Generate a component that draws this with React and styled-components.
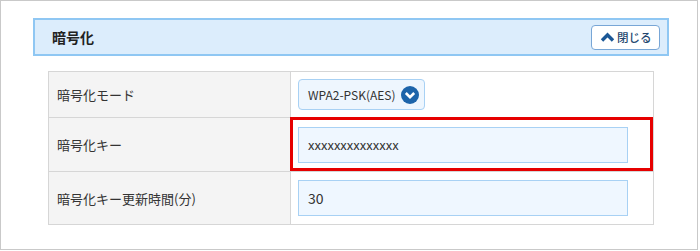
import React from "react";
import styled, { createGlobalStyle } from "styled-components";

const GlobalStyle = createGlobalStyle`
body {
  margin: 0;
  background: #ffffff;
  font-family: "Noto Sans CJK JP", "Noto Sans", sans-serif;
  color: #333333;
}
`;

const Frame = styled.div`
  width: 698px;
  height: 250px;
  box-sizing: border-box;
  border: 1px solid #c9c9c9;
  padding: 17px 28px 0 32px;
`;

const Header = styled.div`
  height: 38px;
  box-sizing: border-box;
  border: 2px solid #8fc7f3;
  background: #dcedfc;
  display: flex;
  align-items: center;
  justify-content: space-between;
  padding: 0 7px 0 17px;
`;

const Title = styled.div`
  font-size: 14px;
  font-weight: bold;
  color: #222222;
`;

const CloseButton = styled.button`
  width: 69px;
  height: 25px;
  box-sizing: border-box;
  border: 1px solid #78a6d6;
  border-radius: 4px;
  background: #ffffff;
  display: flex;
  align-items: center;
  gap: 2px;
  padding: 0 0 0 8px;
  font-family: inherit;
  font-size: 11.5px;
  font-weight: 500;
  color: #24476f;
  cursor: pointer;
`;

const Table = styled.div`
  margin: 15px 15px 0;
  border: 1px solid #d6d6d6;
  display: grid;
  grid-template-columns: 242px 1fr;
  grid-template-rows: 45px 54px 53px;
`;

const Label = styled.div`
  background: #f4f4f4;
  border-right: 1px solid #d6d6d6;
  border-top: ${(p) => (p.$first ? "none" : "1px solid #d6d6d6")};
  display: flex;
  align-items: center;
  padding-left: 8px;
  font-size: 13px;
  color: #333333;
`;

const Value = styled.div`
  position: relative;
  border-top: ${(p) => (p.$first ? "none" : "1px solid #d6d6d6")};
  display: flex;
  align-items: center;
  padding-left: 7px;

  ${(p) =>
    p.$highlight &&
    `
    &::after {
      content: "";
      position: absolute;
      left: -1px;
      top: -1px;
      right: 0;
      bottom: 0;
      border: 3px solid #e60000;
      pointer-events: none;
    }
  `}
`;

const Select = styled.div`
  height: 31px;
  box-sizing: border-box;
  border: 1px solid #a8d1f4;
  border-radius: 4px;
  background: #eef6fe;
  display: flex;
  align-items: center;
  gap: 5px;
  padding: 0 5px 0 9px;
  font-size: 12px;
  color: #333333;
`;

const Input = styled.div`
  width: 330px;
  height: 36px;
  box-sizing: border-box;
  border: 1px solid #a8d1f4;
  background: #eff7ff;
  display: flex;
  align-items: center;
  padding-left: 9px;
  font-size: ${(p) => p.$size || "13px"};
  color: #333333;
`;

const ChevronUp = () => (
  <svg width="15" height="10" viewBox="0 0 15 10">
    <path d="M2 8.5 L7.5 3 L13 8.5" fill="none" stroke="#1b5796" strokeWidth="3.4" />
  </svg>
);

const DropIcon = () => (
  <svg width="18" height="18" viewBox="0 0 18 18">
    <circle cx="9" cy="9" r="9" fill="#1d64aa" />
    <path d="M4.8 7 L9 11.2 L13.2 7" fill="none" stroke="#ffffff" strokeWidth="2.6" />
  </svg>
);

export default function App() {
  return (
    <>
      <GlobalStyle />
      <Frame>
        <Header>
          <Title>暗号化</Title>
          <CloseButton>
            <ChevronUp />
            閉じる
          </CloseButton>
        </Header>
        <Table>
          <Label $first>暗号化モード</Label>
          <Value $first>
            <Select>
              WPA2-PSK(AES)
              <DropIcon />
            </Select>
          </Value>
          <Label>暗号化キー</Label>
          <Value $highlight>
            <Input>xxxxxxxxxxxxxx</Input>
          </Value>
          <Label>暗号化キー更新時間(分)</Label>
          <Value>
            <Input $size="14px">30</Input>
          </Value>
        </Table>
      </Frame>
    </>
  );
}
